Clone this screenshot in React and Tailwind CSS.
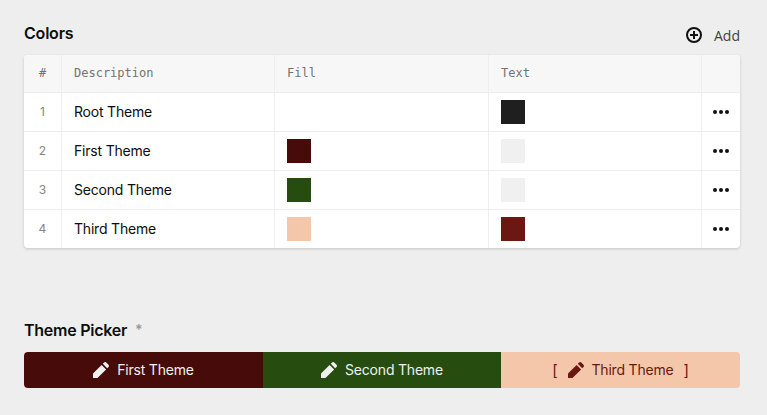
const ROWS = [
  { name: 'Root Theme', fill: '', text: 'bg-[#1f1f1f]' },
  { name: 'First Theme', fill: 'bg-[#470c09]', text: 'bg-[#f0f0f0]' },
  { name: 'Second Theme', fill: 'bg-[#264d0f]', text: 'bg-[#f0f0f0]' },
  { name: 'Third Theme', fill: 'bg-[#f4c6aa]', text: 'bg-[#6a1811]' },
];

const GRID = 'grid grid-cols-[38px_213px_214px_213px_38px]';
const CELL = 'flex items-center border-r border-[#eeeeee] px-3';

function PlusCircle() {
  return (
    <svg width="16" height="16" viewBox="0 0 16 16" fill="none" stroke="#111" strokeWidth="2">
      <circle cx="8" cy="8" r="7" />
      <path d="M8 4v8M4 8h8" />
    </svg>
  );
}

function Pencil() {
  return (
    <svg width="16" height="16" viewBox="0 0 16 16" fill="currentColor">
      <path d="M0 12.2Q0 11.5.5 11L8.6 2.9 13.1 7.4 5 15.5Q4.5 16 3.8 16H0ZM9.8 1.8 11.1.5a1.5 1.5 0 0 1 2.1 0L15.5 2.8a1.5 1.5 0 0 1 0 2.1L14.2 6.2Z" />
    </svg>
  );
}

function Dots() {
  return (
    <svg width="16" height="4" viewBox="0 0 16 4" fill="#111">
      <circle cx="2" cy="2" r="2" />
      <circle cx="8" cy="2" r="2" />
      <circle cx="14" cy="2" r="2" />
    </svg>
  );
}

export default function App() {
  return (
    <div className="h-[415px] w-[767px] bg-[#eeeeee] pl-6 pr-[27px] font-['Inter',sans-serif] text-[14px] leading-5 text-[#0d0d0d]">
      <div className="flex h-[55px] justify-between">
        <h2 className="pt-[23px] text-[16px] font-semibold tracking-[-0.2px]">Colors</h2>
        <div className="flex h-4 items-center gap-3 mt-[27px] font-['Open_Sans',sans-serif] text-[#404040]">
          <PlusCircle />
          <span className="pt-0.5">Add</span>
        </div>
      </div>

      <div className="h-[193px] overflow-hidden rounded-[4px] bg-white shadow-[0_1px_3px_rgba(0,0,0,0.18)]">
        <div className={GRID + " h-[38px] border-b border-[#eeeeee] bg-[#f7f7f7] font-['DejaVu_Sans_Mono',monospace] text-[12px] text-[#737373]"}>
          <div className="flex items-center justify-center border-r border-[#eeeeee] pb-0.5">#</div>
          <div className={CELL + ' pb-0.5'}>Description</div>
          <div className={CELL + ' pb-0.5'}>Fill</div>
          <div className={CELL + ' pb-0.5'}>Text</div>
          <div />
        </div>
        {ROWS.map((row, i) => (
          <div key={row.name} className={GRID + ' h-[39px] border-b border-[#eeeeee] last:h-[38px] last:border-b-0'}>
            <div className="flex items-center justify-center border-r border-[#eeeeee] text-[12px] text-[#858585]">{i + 1}</div>
            <div className={CELL + ' tracking-[-0.2px]'}>{row.name}</div>
            <div className={CELL}><div className={'size-6 ' + row.fill} /></div>
            <div className={CELL}><div className={'size-6 ' + row.text} /></div>
            <div className="flex items-center justify-center"><Dots /></div>
          </div>
        ))}
      </div>

      <div className="flex gap-2 pt-[72px] text-[16px] font-semibold">
        <h2 className="tracking-[-0.25px]">Theme Picker</h2>
        <span className="text-[14px] font-semibold text-[#999]">*</span>
      </div>

      <div className="mt-3 grid h-9 grid-cols-[239px_238px_239px] overflow-hidden rounded-[4px] tracking-[-0.2px]">
        <div className="flex items-center justify-center gap-2 bg-[#470c09] text-[#f0f0f0]">
          <Pencil /><span>First Theme</span>
        </div>
        <div className="flex items-center justify-center gap-2 bg-[#264d0f] text-[#f0f0f0]">
          <Pencil /><span>Second Theme</span>
        </div>
        <div className="flex items-center justify-center bg-[#f4c6aa] text-[#6a1811]">
          <span className="mr-2.5 pt-0.5 text-[15px]">[</span><Pencil /><span className="ml-2">Third Theme</span><span className="ml-2.5 pt-0.5 text-[15px]">]</span>
        </div>
      </div>
    </div>
  );
}
